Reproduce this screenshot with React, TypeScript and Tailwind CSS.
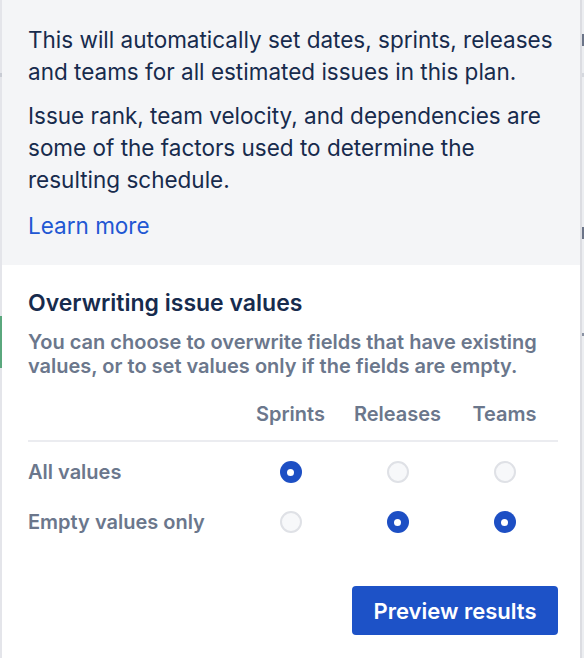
import React, { useState } from "react";

type Field = "sprints" | "releases" | "teams";
type Mode = "all" | "empty";

const columns: { key: Field; label: string }[] = [
  { key: "sprints", label: "Sprints" },
  { key: "releases", label: "Releases" },
  { key: "teams", label: "Teams" },
];

const rows: { key: Mode; label: string }[] = [
  { key: "all", label: "All values" },
  { key: "empty", label: "Empty values only" },
];

const Radio = ({ checked, onClick }: { checked: boolean; onClick: () => void }) => (
  <button
    type="button"
    onClick={onClick}
    className={
      checked
        ? "w-[22px] h-[22px] rounded-full bg-[#1d4fc4] flex items-center justify-center"
        : "w-[22px] h-[22px] rounded-full bg-[#f7f8fa] border-2 border-[#dfe1e6]"
    }
  >
    {checked && <span className="w-[7px] h-[7px] rounded-full bg-white" />}
  </button>
);

const App = () => {
  const [values, setValues] = useState<Record<Field, Mode>>({
    sprints: "all",
    releases: "empty",
    teams: "empty",
  });

  return (
    <div className="flex w-[584px] h-[658px] bg-white font-['Inter','Noto_Sans',sans-serif] overflow-hidden">
      {/* page behind the popup, left edge */}
      <div className="w-[2px] flex flex-col bg-[#e4e5ea]">
        <div className="h-[73px]" />
        <div className="h-[4px] bg-[#c9ccd4]" />
        <div className="h-[239px]" />
        <div className="h-[52px] bg-[#5aa77d]" />
      </div>
      <div className="flex-1 flex flex-col border-r-2 border-[#dcdde2]">
        <div className="bg-[#f4f5f7] pl-[26px] pr-[22px] pt-[24px] pb-[23px] text-[#172b4d] text-[22.5px] leading-[32px]">
          <p>This will automatically set dates, sprints, releases and teams for all estimated issues in this plan.</p>
          <p className="mt-[12px]">
            Issue rank, team velocity, and dependencies are some of the factors used to determine the resulting schedule.
          </p>
          <a className="block mt-[14px] text-[#2157d3]">Learn more</a>
        </div>
        <div className="pl-[26px] pr-[22px] pt-[24px]">
          <h2 className="text-[23px] leading-[28px] font-semibold text-[#172b4d]">Overwriting issue values</h2>
          <p className="mt-[13px] text-[20px] leading-[24px] font-semibold text-[#6b778c]">
            You can choose to overwrite fields that have existing values, or to set values only if the fields are empty.
          </p>
          <div className="mt-[24px] grid grid-cols-[1fr_107px_107px_107px] border-b-2 border-[#ebecf0] pb-[14px] text-[20px] leading-[24px] font-semibold text-[#6b778c]">
            <div />
            {columns.map((c) => (
              <div key={c.key} className="text-center">
                {c.label}
              </div>
            ))}
          </div>
          <div className="pt-[5px]">
            {rows.map((r) => (
              <div
                key={r.key}
                className="grid grid-cols-[1fr_107px_107px_107px] items-center h-[50px] text-[20px] font-semibold text-[#6b778c]"
              >
                <div>{r.label}</div>
                {columns.map((c) => (
                  <div key={c.key} className="flex justify-center">
                    <Radio
                      checked={values[c.key] === r.key}
                      onClick={() => setValues({ ...values, [c.key]: r.key })}
                    />
                  </div>
                ))}
              </div>
            ))}
          </div>
          <div className="flex justify-end mt-[39px]">
            <button className="w-[206px] h-[49px] pt-[2px] rounded-[4px] bg-[#1d52c7] text-white text-[22px] font-semibold">
              Preview results
            </button>
          </div>
        </div>
      </div>
      {/* page behind the popup, right edge */}
      <div className="w-[2px] flex flex-col bg-[#eceef1]">
        <div className="h-[34px]" />
        <div className="h-[12px] bg-[#6b7488]" />
        <div className="h-[27px]" />
        <div className="h-[4px] bg-[#d5d8de]" />
        <div className="h-[150px]" />
        <div className="h-[12px] bg-[#6b7488]" />
        <div className="h-[94px]" />
        <div className="h-[3px] bg-[#8a92a3]" />
      </div>
    </div>
  );
};

export default App;
